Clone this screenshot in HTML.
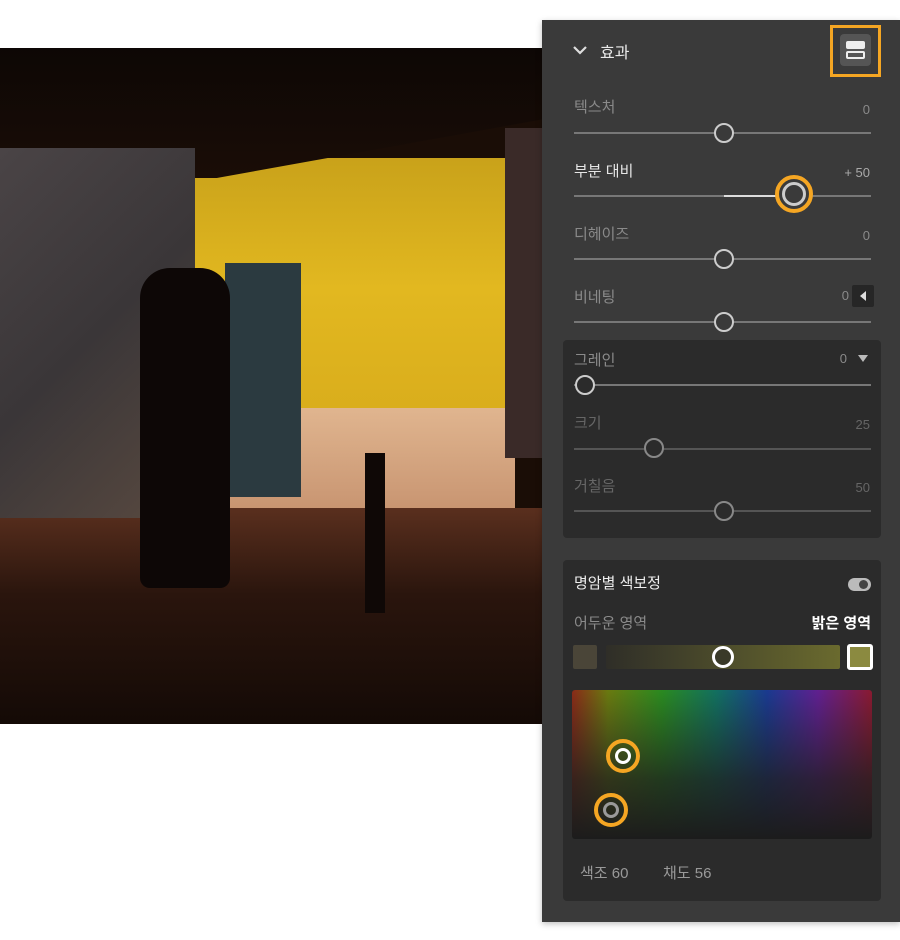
<!DOCTYPE html>
<html><head><meta charset="utf-8"><style>
*{margin:0;padding:0;box-sizing:border-box}
body{width:900px;height:940px;background:#fff;position:relative;overflow:hidden;font-family:"Liberation Sans","Noto Sans CJK KR",sans-serif}
.abs{position:absolute}
#photo{left:0;top:48px;width:542px;height:676px;background:#1a0d06;overflow:hidden}
#panel{left:542px;top:20px;width:358px;height:902px;background:#3a3a3a;box-shadow:0 2px 6px rgba(0,0,0,.25)}
.lbl{position:absolute;font-size:15px;color:#8a8a8a}
.val{position:absolute;font-size:13px;color:#8a8a8a;text-align:right}
.track{position:absolute;height:2px;background:#777}
.knob{position:absolute;width:20px;height:20px;border-radius:50%;border:2px solid #ccc;background:#3a3a3a}
.box{position:absolute;background:#2b2b2b;border-radius:4px}
</style></head><body>
<div id="photo" class="abs">
 <div class="abs" style="left:195px;top:110px;width:320px;height:260px;background:linear-gradient(180deg,#c9a21a,#e2b820 50%,#d9ad1c);"></div>
 <div class="abs" style="left:0;top:0;width:542px;height:130px;background:linear-gradient(180deg,#0d0705,#1a0d06);clip-path:polygon(0 0,100% 0,100% 55%,40% 100%,0 100%)"></div>
 <div class="abs" style="left:195px;top:360px;width:320px;height:120px;background:linear-gradient(180deg,#e0b58f,#c48f6c)"></div>
 <div class="abs" style="left:0;top:460px;width:542px;height:216px;background:linear-gradient(180deg,#5a2f1e,#2a150d 40%,#140a06)"></div>
 <div class="abs" style="left:0;top:100px;width:195px;height:370px;background:linear-gradient(135deg,#4a4446,#3a3638 50%,#5a4a40)"></div>
 <div class="abs" style="left:225px;top:215px;width:76px;height:234px;background:#2b3a40"></div>
 <div class="abs" style="left:505px;top:80px;width:37px;height:330px;background:#3a2a28"></div>
 <div class="abs" style="left:140px;top:220px;width:90px;height:320px;background:#0d0706;border-radius:30px 30px 10px 10px"></div>
 <div class="abs" style="left:365px;top:405px;width:20px;height:160px;background:#0f0806"></div>
</div>
<div id="panel" class="abs">
 <svg class="abs" style="left:30px;top:24px" width="16" height="12"><path d="M2 3 L8 9 L14 3" stroke="#ddd" stroke-width="2.2" fill="none"/></svg>
 <div class="abs" style="left:58px;top:19px;font-size:16px;color:#e8e8e8">효과</div>
 <div class="abs" style="left:288px;top:5px;width:51px;height:52px;border:3px solid #f5a623"></div>
 <div class="abs" style="left:298px;top:14px;width:31px;height:32px;background:#555;border-radius:4px"></div>
 <div class="abs" style="left:304px;top:21px;width:19px;height:8px;background:#eee;border-radius:2px"></div>
 <div class="abs" style="left:304px;top:31px;width:19px;height:8px;border:2px solid #eee;border-radius:2px"></div>

 <div class="lbl" style="left:32px;top:76px">텍스처</div><div class="val" style="right:30px;top:82px">0</div>
 <div class="track" style="left:32px;top:112px;width:297px"></div><div class="knob" style="left:172px;top:103px"></div>

 <div class="lbl" style="left:32px;top:140px;color:#e6e6e6">부분 대비</div><div class="val" style="right:30px;top:145px;color:#aaa">+ 50</div>
 <div class="track" style="left:32px;top:175px;width:297px"></div><div class="track" style="left:182px;top:175px;width:60px;background:#ddd"></div>
 <div class="abs" style="left:233px;top:155px;width:38px;height:38px;border-radius:50%;border:4px solid #f5a623;background:#3a3a3a"></div>
 <div class="abs" style="left:240px;top:162px;width:24px;height:24px;border-radius:50%;border:3px solid #ccc"></div>

 <div class="lbl" style="left:32px;top:203px">디헤이즈</div><div class="val" style="right:30px;top:208px">0</div>
 <div class="track" style="left:32px;top:238px;width:297px"></div><div class="knob" style="left:172px;top:229px"></div>

 <div class="lbl" style="left:32px;top:266px">비네팅</div><div class="val" style="right:51px;top:268px">0</div>
 <div class="abs" style="left:310px;top:265px;width:22px;height:22px;background:#262626;border-radius:2px"></div>
 <svg class="abs" style="left:316px;top:270px" width="10" height="12"><path d="M8 1 L2 6 L8 11Z" fill="#ddd"/></svg>
 <div class="track" style="left:32px;top:301px;width:297px"></div><div class="knob" style="left:172px;top:292px"></div>

 <div class="box" style="left:21px;top:320px;width:318px;height:198px"></div>
 <div class="lbl" style="left:32px;top:329px">그레인</div><div class="val" style="right:53px;top:331px">0</div>
 <svg class="abs" style="left:315px;top:334px" width="12" height="9"><path d="M1 1 L11 1 L6 8Z" fill="#bbb"/></svg>
 <div class="track" style="left:32px;top:364px;width:297px"></div><div class="knob" style="left:33px;top:355px;background:#2b2b2b"></div>
 <div class="lbl" style="left:32px;top:392px;color:#666">크기</div><div class="val" style="right:30px;top:397px;color:#666">25</div>
 <div class="track" style="left:32px;top:428px;width:297px;background:#555"></div><div class="knob" style="left:102px;top:418px;border-color:#888;background:#2b2b2b"></div>
 <div class="lbl" style="left:32px;top:455px;color:#666">거칠음</div><div class="val" style="right:30px;top:460px;color:#666">50</div>
 <div class="track" style="left:32px;top:490px;width:297px;background:#555"></div><div class="knob" style="left:172px;top:481px;border-color:#888;background:#2b2b2b"></div>

 <div class="box" style="left:21px;top:540px;width:318px;height:341px"></div>
 <div class="abs" style="left:32px;top:552px;font-size:15px;color:#eee">명암별 색보정</div>
 <div class="abs" style="left:306px;top:558px;width:23px;height:13px;background:#bbb;border-radius:7px"></div>
 <div class="abs" style="left:317px;top:560px;width:9px;height:9px;background:#444;border-radius:50%"></div>
 <div class="lbl" style="left:32px;top:592px">어두운 영역</div>
 <div class="abs" style="right:29px;top:592px;font-size:15px;color:#fff;font-weight:bold">밝은 영역</div>
 <div class="abs" style="left:31px;top:625px;width:24px;height:24px;background:#4a4538;border-radius:2px"></div>
 <div class="abs" style="left:64px;top:625px;width:234px;height:24px;background:linear-gradient(90deg,#2f2e28,#6a6a2e);border-radius:2px"></div>
 <div class="abs" style="left:170px;top:626px;width:22px;height:22px;border-radius:50%;border:3px solid #fff;background:#3a3a28"></div>
 <div class="abs" style="left:305px;top:624px;width:26px;height:26px;background:#8b8a40;border:3px solid #fff;border-radius:3px"></div>
 <div class="abs" style="left:30px;top:670px;width:300px;height:149px;border-radius:3px;background:linear-gradient(180deg,rgba(0,0,0,0) 0%,rgba(30,30,30,.75) 60%,#1c1c1c 100%),linear-gradient(90deg,#8a2a18,#6a7a10 12%,#2a8a20 30%,#127060 48%,#1a3a90 65%,#602090 82%,#8a1a30)"></div>
 <div class="abs" style="left:64px;top:719px;width:34px;height:34px;border-radius:50%;border:4px solid #f5a623"></div>
 <div class="abs" style="left:73px;top:728px;width:16px;height:16px;border-radius:50%;border:3px solid #fff"></div>
 <div class="abs" style="left:52px;top:773px;width:34px;height:34px;border-radius:50%;border:4px solid #f5a623"></div>
 <div class="abs" style="left:61px;top:782px;width:16px;height:16px;border-radius:50%;border:3px solid #999"></div>
 <div class="lbl" style="left:38px;top:842px;color:#999;font-size:15px">색조 60</div>
 <div class="lbl" style="left:121px;top:842px;color:#999;font-size:15px">채도 56</div>
</div>
</body></html>
